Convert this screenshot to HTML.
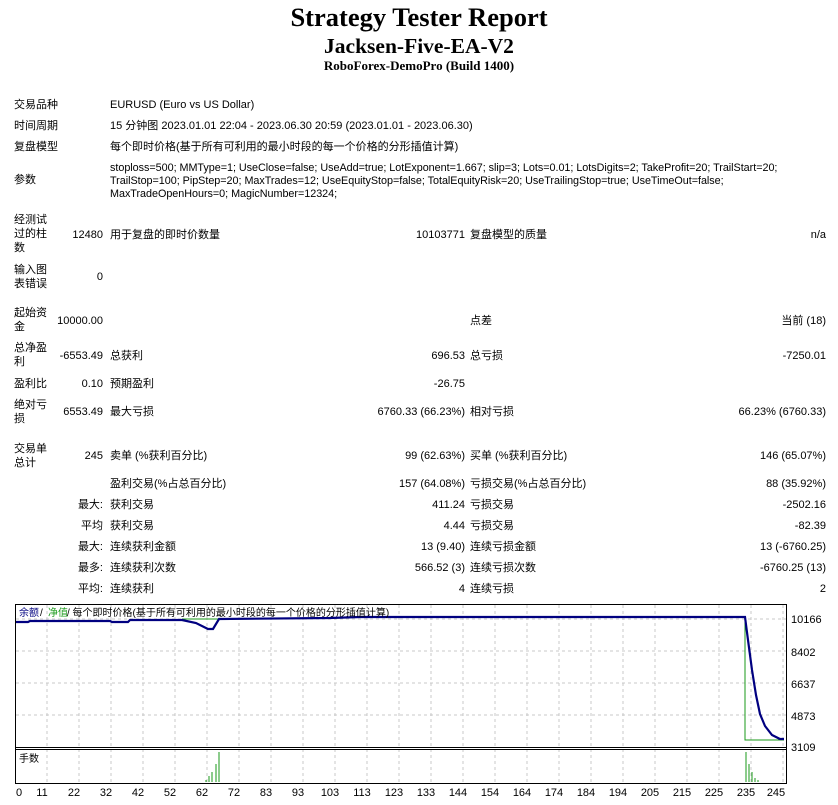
<!DOCTYPE html>
<html><head><meta charset="utf-8"><style>
body{margin:0;width:838px;height:805px;background:#fff;position:relative;overflow:hidden;font-family:"Liberation Sans","Noto Sans CJK SC",sans-serif;font-size:11px;color:#000}
div{position:absolute;white-space:nowrap;line-height:14px}
.t{left:0;width:838px;text-align:center;font-family:"Liberation Serif","Noto Serif CJK SC",serif;font-weight:bold}
.l{left:14px}.v1{right:735px}.l2{left:110px}.v2{right:373px}.l3{left:470px}.v3{right:12px}
svg{position:absolute;left:0;top:0}
</style></head><body>
<div class="t" style="top:2px;font-size:26.5px;line-height:30px">Strategy Tester Report</div>
<div class="t" style="top:34px;font-size:21.5px;line-height:24px">Jacksen-Five-EA-V2</div>
<div class="t" style="top:59px;font-size:13px">RoboForex-DemoPro (Build 1400)</div>

<div class="l" style="top:98px">交易品种</div><div class="l2" style="top:98px">EURUSD (Euro vs US Dollar)</div>
<div class="l" style="top:119px">时间周期</div><div class="l2" style="top:119px">15 分钟图 2023.01.01 22:04 - 2023.06.30 20:59 (2023.01.01 - 2023.06.30)</div>
<div class="l" style="top:140px">复盘模型</div><div class="l2" style="top:140px">每个即时价格(基于所有可利用的最小时段的每一个价格的分形插值计算)</div>
<div class="l" style="top:173px">参数</div>
<div class="l2" style="top:162px;line-height:13px;font-size:10.8px;letter-spacing:-0.03px">stoploss=500; MMType=1; UseClose=false; UseAdd=true; LotExponent=1.667; slip=3; Lots=0.01; LotsDigits=2; TakeProfit=20; TrailStart=20;<br>TrailStop=100; PipStep=20; MaxTrades=12; UseEquityStop=false; TotalEquityRisk=20; UseTrailingStop=true; UseTimeOut=false;<br>MaxTradeOpenHours=0; MagicNumber=12324;</div>

<div class="l" style="top:213px">经测试<br>过的柱<br>数</div><div class="v1" style="top:228px">12480</div><div class="l2" style="top:228px">用于复盘的即时价数量</div><div class="v2" style="top:228px">10103771</div><div class="l3" style="top:228px">复盘模型的质量</div><div class="v3" style="top:228px">n/a</div>
<div class="l" style="top:263px">输入图<br>表错误</div><div class="v1" style="top:270px">0</div>

<div class="l" style="top:306px">起始资<br>金</div><div class="v1" style="top:314px">10000.00</div><div class="l3" style="top:314px">点差</div><div class="v3" style="top:314px">当前 (18)</div>
<div class="l" style="top:341px">总净盈<br>利</div><div class="v1" style="top:349px">-6553.49</div><div class="l2" style="top:349px">总获利</div><div class="v2" style="top:349px">696.53</div><div class="l3" style="top:349px">总亏损</div><div class="v3" style="top:349px">-7250.01</div>
<div class="l" style="top:377px">盈利比</div><div class="v1" style="top:377px">0.10</div><div class="l2" style="top:377px">预期盈利</div><div class="v2" style="top:377px">-26.75</div>
<div class="l" style="top:398px">绝对亏<br>损</div><div class="v1" style="top:405px">6553.49</div><div class="l2" style="top:405px">最大亏损</div><div class="v2" style="top:405px">6760.33 (66.23%)</div><div class="l3" style="top:405px">相对亏损</div><div class="v3" style="top:405px">66.23% (6760.33)</div>

<div class="l" style="top:442px">交易单<br>总计</div><div class="v1" style="top:449px">245</div><div class="l2" style="top:449px">卖单 (%获利百分比)</div><div class="v2" style="top:449px">99 (62.63%)</div><div class="l3" style="top:449px">买单 (%获利百分比)</div><div class="v3" style="top:449px">146 (65.07%)</div>
<div class="l2" style="top:477px">盈利交易(%占总百分比)</div><div class="v2" style="top:477px">157 (64.08%)</div><div class="l3" style="top:477px">亏损交易(%占总百分比)</div><div class="v3" style="top:477px">88 (35.92%)</div>
<div class="v1" style="top:498px">最大:</div><div class="l2" style="top:498px">获利交易</div><div class="v2" style="top:498px">411.24</div><div class="l3" style="top:498px">亏损交易</div><div class="v3" style="top:498px">-2502.16</div>
<div class="v1" style="top:519px">平均</div><div class="l2" style="top:519px">获利交易</div><div class="v2" style="top:519px">4.44</div><div class="l3" style="top:519px">亏损交易</div><div class="v3" style="top:519px">-82.39</div>
<div class="v1" style="top:540px">最大:</div><div class="l2" style="top:540px">连续获利金额</div><div class="v2" style="top:540px">13 (9.40)</div><div class="l3" style="top:540px">连续亏损金额</div><div class="v3" style="top:540px">13 (-6760.25)</div>
<div class="v1" style="top:561px">最多:</div><div class="l2" style="top:561px">连续获利次数</div><div class="v2" style="top:561px">566.52 (3)</div><div class="l3" style="top:561px">连续亏损次数</div><div class="v3" style="top:561px">-6760.25 (13)</div>
<div class="v1" style="top:582px">平均:</div><div class="l2" style="top:582px">连续获利</div><div class="v2" style="top:582px">4</div><div class="l3" style="top:582px">连续亏损</div><div class="v3" style="top:582px">2</div>

<svg width="838" height="805" viewBox="0 0 838 805">
<g stroke="#c8c8c8" stroke-dasharray="3,3" stroke-width="1">
<path d="M47 605V783M79 605V783M111 605V783M143 605V783M175 605V783M207 605V783M239 605V783M271 605V783M303 605V783M335 605V783M367 605V783M399 605V783M431 605V783M463 605V783M495 605V783M527 605V783M559 605V783M591 605V783M623 605V783M655 605V783M687 605V783M719 605V783M751 605V783M783 605V783"/>
<path d="M16 651H786M16 683H786M16 715H786M16 619H786"/>
</g>
<rect x="15.5" y="604.5" width="771" height="179" fill="none" stroke="#000"/>
<path d="M15 747.5H787M15 749.5H787" stroke="#000"/>
<path d="M182 619H218M745 620V730V740H784" stroke="#1a9a1a" fill="none"/>
<path d="M16 622H28L30 621H110L112 622H128L130 620H182L196 623L208 629H213L219 619L330 618L360 617H745L748 640L752 670L756 695L760 714L765 726L772 735L780 739H784" stroke="#000080" stroke-width="2.2" fill="none"/>
<g stroke="#1a9a1a"><path d="M206 782V780M209 782V776M212 782V772M216 782V764M219 782V752M746 782V752M749 782V764M752 782V772M755 782V778M758 782V780"/></g>
<g font-family="Liberation Sans,Noto Sans CJK SC,sans-serif" font-size="10">
<text x="19" y="616" fill="#000080">余额</text><text x="40" y="616"> /</text><text x="48" y="616" fill="#1a9a1a">净值</text><text x="67" y="616"> / 每个即时价格(基于所有可利用的最小时段的每一个价格的分形插值计算)</text>
<text x="19" y="762">手数</text>
<g font-size="11"><text x="791" y="623">10166</text><text x="791" y="656">8402</text><text x="791" y="688">6637</text><text x="791" y="720">4873</text><text x="791" y="751">3109</text></g>
<g font-size="11" text-anchor="middle">
<text x="19" y="796">0</text><text x="42" y="796">11</text><text x="74" y="796">22</text><text x="106" y="796">32</text><text x="138" y="796">42</text><text x="170" y="796">52</text><text x="202" y="796">62</text><text x="234" y="796">72</text><text x="266" y="796">83</text><text x="298" y="796">93</text><text x="330" y="796">103</text><text x="362" y="796">113</text><text x="394" y="796">123</text><text x="426" y="796">133</text><text x="458" y="796">144</text><text x="490" y="796">154</text><text x="522" y="796">164</text><text x="554" y="796">174</text><text x="586" y="796">184</text><text x="618" y="796">194</text><text x="650" y="796">205</text><text x="682" y="796">215</text><text x="714" y="796">225</text><text x="746" y="796">235</text><text x="776" y="796">245</text>
</g></g>
</svg>
</body></html>
